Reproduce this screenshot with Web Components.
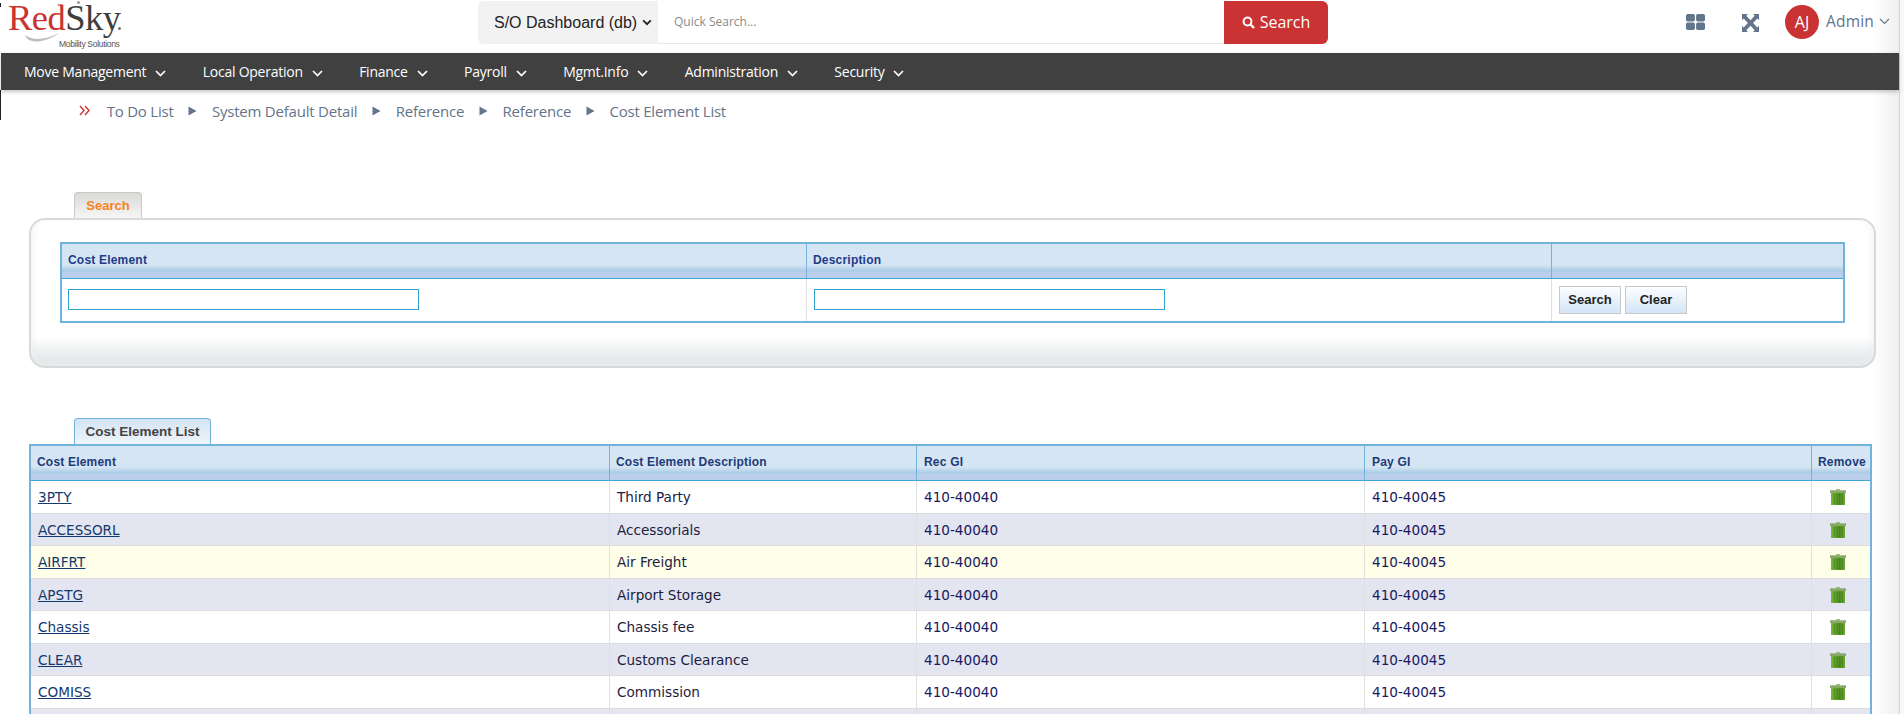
<!DOCTYPE html>
<html>
<head>
<meta charset="utf-8">
<title>Cost Element List</title>
<style>
	html, body { margin: 0; padding: 0; background: #fff; height: 714px; overflow: hidden; }
	body { font-family: "Open Sans", sans-serif; position: relative; }
</style>
</head>
<body>
<edge-strip></edge-strip>
<top-bar></top-bar>
<main-nav></main-nav>
<bread-crumb></bread-crumb>
<search-panel></search-panel>
<cost-list>
	<cost-row code="3PTY" desc="Third Party"></cost-row>
	<cost-row code="ACCESSORL" desc="Accessorials" tone="alt"></cost-row>
	<cost-row code="AIRFRT" desc="Air Freight" tone="over"></cost-row>
	<cost-row code="APSTG" desc="Airport Storage" tone="alt"></cost-row>
	<cost-row code="Chassis" desc="Chassis fee"></cost-row>
	<cost-row code="CLEAR" desc="Customs Clearance" tone="alt"></cost-row>
	<cost-row code="COMISS" desc="Commission"></cost-row>
	<cost-row tone="alt" blank></cost-row>
</cost-list>

<script>
class TopBar extends HTMLElement {
	connectedCallback() {
		const shadow = this.attachShadow({ mode: "open" });
		shadow.innerHTML = `
			<style>
				:host { display: flex; height: 53px; box-sizing: border-box; position: relative; z-index: 1; }
				.logo { width: 478px; flex: none; padding-left: 8px; box-sizing: border-box; position: relative; }
				.name { font: 36.5px/36px "Liberation Serif", serif; letter-spacing: -.5px; color: #c8342f; display: block; }
				.name b { font-weight: 400; color: #3e3e3e; }
				.dot { position: absolute; left: 77px; top: 1px; width: 3px; height: 3px; border-radius: 50%; background: #999; }
				.reg { position: absolute; left: 118px; top: 27px; width: 3px; height: 3px; border-radius: 50%; background: #777; }
				.tag { position: absolute; left: 59px; top: 39px; font: 8.6px/10px "Liberation Sans", sans-serif; letter-spacing: -.35px; color: #555; white-space: nowrap; }
				.swoosh { position: absolute; left: 25px; top: 32px; }
				.tick { position: absolute; left: 0; top: 3px; width: 1px; height: 4px; background: #222; }
				.search { display: flex; width: 850px; height: 43px; margin-top: 1px; }
				.db { width: 180px; background: #f2f2f2; border-radius: 6px 0 0 6px; font: 16px/43px "Liberation Sans", sans-serif; color: #222; padding-left: 16px; box-sizing: border-box; display: flex; align-items: center; gap: 5px; white-space: nowrap; }
				.q { flex: 1; border-bottom: 1px solid #e8e8e8; font: 12px/42px "Open Sans", sans-serif; color: #8a8a8a; padding-left: 16px; }
				.go { width: 104px; background: #cb3234; border-radius: 0 6px 6px 0; color: #fff; font: 16px/43px "Open Sans", sans-serif; display: flex; align-items: center; justify-content: center; gap: 5px; }
				.tools { flex: 1; display: flex; align-items: center; padding-left: 358px; color: #64748b; height: 44px; }
				.tools svg { flex: none; }
				.exp { margin-left: 37px; margin-top: 1px; }
				.av { flex: none; width: 34px; height: 34px; margin-left: 26px; border-radius: 50%; background: #cb3234; color: #fff; font: 16px/34px "Open Sans", sans-serif; text-align: center; }
				.me { font: 15.5px/20px "Open Sans", sans-serif; margin-left: 7px; white-space: nowrap; letter-spacing: .2px; margin-top: -2px; }
				.me-c { margin-left: 5px; margin-top: -2px; }
			</style>
			<div class="logo">
				<i class="tick"></i>
				<svg class="swoosh" width="36" height="14" viewBox="0 0 36 14"><path d="M0 3C2 10 15 14 34 1C20 8 8 9 0 3Z" fill="#bdbdbd"/></svg>
				<span class="name">Red<b>Sky</b></span>
				<span class="dot"></span>
				<span class="reg"></span>
				<span class="tag">Mobility Solutions</span>
			</div>
			<div class="search">
				<div class="db">S/O Dashboard (db)<svg width="10" height="7" viewBox="0 0 10 7"><path d="M1.2 1.4L5 5.2L8.8 1.4" fill="none" stroke="#222" stroke-width="1.8"/></svg></div>
				<div class="q">Quick Search...</div>
				<div class="go"><svg width="13" height="13" viewBox="0 0 13 13"><circle cx="5.5" cy="5.5" r="3.9" fill="none" stroke="#fff" stroke-width="2"/><path d="M8.4 8.4L12 12" stroke="#fff" stroke-width="2.4"/></svg>Search</div>
			</div>
			<div class="tools">
				<svg width="19" height="16" viewBox="0 0 19 16" fill="#64748b"><rect width="8.9" height="7.4" rx="1.7"/><rect x="10.1" width="8.9" height="7.4" rx="1.7"/><rect y="8.6" width="8.9" height="7.4" rx="1.7"/><rect x="10.1" y="8.6" width="8.9" height="7.4" rx="1.7"/></svg>
				<svg class="exp" width="17" height="18" viewBox="0 0 17 17" preserveAspectRatio="none" fill="#64748b"><path d="M0 0H6L4.3 1.7L8.5 5.9L12.7 1.7L11 0H17V6L15.3 4.3L11.1 8.5L15.3 12.7L17 11V17H11L12.7 15.3L8.5 11.1L4.3 15.3L6 17H0V11L1.7 12.7L5.9 8.5L1.7 4.3L0 6Z"/></svg>
				<div class="av">AJ</div>
				<span class="me">Admin</span>
				<svg class="me-c" width="11" height="7" viewBox="0 0 11 7"><path d="M1 1L5.5 5.5L10 1" fill="none" stroke="#64748b" stroke-width="1.1"/></svg>
			</div>
		`;
	}
}
customElements.define("top-bar", TopBar);

class MainNav extends HTMLElement {
	connectedCallback() {
		const items = ["Move Management", "Local Operation", "Finance", "Payroll", "Mgmt.Info", "Administration", "Security"];
		const shadow = this.attachShadow({ mode: "open" });
		shadow.innerHTML = `
			<style>
				:host { display: flex; height: 37px; margin: 0 5px 0 1px; background: #404040; box-shadow: 0 2px 4px rgba(0,0,0,.22); padding: 1px 0 0 23px; box-sizing: border-box; position: relative; align-items: center; gap: 36.4px; z-index: 2; }
				span { color: #fff; font: 14px/36px "Open Sans", sans-serif; letter-spacing: -.25px; display: flex; align-items: center; gap: 9px; white-space: nowrap; }
				svg { margin-top: 2px; }
			</style>
			${items.map(t => `<span>${t}<svg width="11" height="7" viewBox="0 0 11 7"><path d="M1 1L5.5 5.5L10 1" fill="none" stroke="#fff" stroke-width="1.7"/></svg></span>`).join("")}
		`;
	}
}
customElements.define("main-nav", MainNav);

class BreadCrumb extends HTMLElement {
	connectedCallback() {
		const items = ["To Do List", "System Default Detail", "Reference", "Reference", "Cost Element List"];
		const shadow = this.attachShadow({ mode: "open" });
		shadow.innerHTML = `
			<style>
				:host { display: flex; height: 36px; padding: 5px 0 0 79px; box-sizing: border-box; align-items: center; gap: 14.7px; font: 15px/20px "Open Sans", sans-serif; color: #64748b; letter-spacing: -.22px; position: relative; }
				:host::before { content: ""; position: absolute; left: 0; top: 0; width: 1px; height: 30px; background: #222; }
				svg { flex: none; }
				.r { margin-right: 2px; }
			</style>
			<svg class="r" width="11" height="11" viewBox="0 0 11 11"><path d="M1 1L5 5.5L1 10M6 1L10 5.5L6 10" fill="none" stroke="#cb3234" stroke-width="1.4"/></svg>
			${items.map((t, i) => `${i ? `<svg width="9" height="10" viewBox="0 0 9 10"><path d="M0.5 0.5L8.5 5L0.5 9.5Z" fill="#64748b"/></svg>` : ""}<span>${t}</span>`).join("")}
		`;
	}
}
customElements.define("bread-crumb", BreadCrumb);

class SearchPanel extends HTMLElement {
	connectedCallback() {
		const shadow = this.attachShadow({ mode: "open" });
		shadow.innerHTML = `
			<style>
				:host { display: block; margin: 66px 0 0 29px; width: 1847px; font-family: "Liberation Sans", sans-serif; position: relative; }
				.tab { display: block; margin-left: 45px; height: 26px; width: 68px; box-sizing: border-box; border: 1px solid #c9c9c7; border-bottom: 0; border-radius: 4px 4px 0 0; background: linear-gradient(#d9d9d7, #f6f6f4); color: #f58220; font: bold 13px/25px "Liberation Sans", sans-serif; text-align: center; }
				.box { height: 150px; box-sizing: border-box; border: 2px solid #d9d9d9; border-radius: 16px; background: linear-gradient(#fff 0, #fff 117px, #e6e9eb 138px); box-shadow: inset 6px 0 10px -6px #eceeef, inset -6px 0 10px -6px #eceeef; padding: 22px 29px 0; }
				.t { border: 2px solid #72b3dd; display: grid; grid-template-columns: 745px 745px 1fr; grid-template-rows: 35px 1fr; height: 81px; box-sizing: border-box; background: #fff; }
				.h { box-sizing: border-box; border-bottom: 1px solid #3ea6d2; background: linear-gradient(#d6e5f4 0, #d6e5f4 21px, #a9cbe5 27px, #bbcfec 28px, #bbcfec 100%); color: #1f3c88; font: bold 12px/32px "Liberation Sans", sans-serif; padding-left: 6px; letter-spacing: .2px; border-right: 1px solid #72b3dd; }
				.h:nth-child(3) { border-right: 0; }
				.c { border-right: 1px solid #e0e0e0; padding: 10px 0 0 6px; box-sizing: border-box; }
				.c:nth-child(5) { padding-left: 7px; }
				.c:nth-child(6) { border-right: 0; padding-left: 7px; display: flex; gap: 4px; }
				.i { width: 351px; height: 21px; box-sizing: border-box; border: 1px solid #2fa0cf; }
				.b { width: 62px; height: 28px; box-sizing: border-box; border: 1px solid #c8c8c8; background: linear-gradient(#fdfeff, #d3e5f7); color: #222; font: bold 13px/26px "Liberation Sans", sans-serif; text-align: center; margin-top: -3px; }
			</style>
			<div class="tab">Search</div>
			<div class="box">
				<div class="t">
					<div class="h">Cost Element</div><div class="h">Description</div><div class="h"></div>
					<div class="c"><div class="i"></div></div>
					<div class="c"><div class="i"></div></div>
					<div class="c"><div class="b">Search</div><div class="b">Clear</div></div>
				</div>
			</div>
		`;
	}
}
customElements.define("search-panel", SearchPanel);

class CostRow extends HTMLElement {
	connectedCallback() {
		const shadow = this.attachShadow({ mode: "open" });
		const tone = this.getAttribute("tone");
		const blank = this.hasAttribute("blank");
		const bg = tone === "alt" ? "#e3e5f0" : tone === "over" ? "#fefee9" : "#fff";
		shadow.innerHTML = `
			<style>
				:host { display: grid; grid-template-columns: 579px 307px 448px 447px 1fr; height: 32.5px; box-sizing: border-box; border-bottom: 1px solid #dcdcdc; background: ${bg}; font: 13.6px/32px "DejaVu Sans", sans-serif; color: #1c1c40; }
				div { padding-left: 7px; border-right: 1px solid #e0e0e0; white-space: nowrap; box-sizing: border-box; }
				div:first-child { padding-left: 8px; }
				div:last-child { border-right: 0; padding: 0 7px 0 0; display: flex; justify-content: center; align-items: center; }
				a { color: #14396e; text-decoration: underline; }
				.n { color: #1a1a5e; }
			</style>
			<div><a>${this.getAttribute("code") || ""}</a></div>
			<div>${this.getAttribute("desc") || ""}</div>
			<div class="n">${blank ? "" : "410-40040"}</div>
			<div class="n">${blank ? "" : "410-40045"}</div>
			<div>${blank ? "" : `
				<svg width="16" height="16" viewBox="0 0 16 16">
					<defs><linearGradient id="g" x1="0" y1="0" x2="1" y2="0"><stop offset="0" stop-color="#7cb83e"/><stop offset=".6" stop-color="#4f8f1f"/><stop offset="1" stop-color="#6ea536"/></linearGradient></defs>
					<path d="M6 0.3H10V1.5H6Z" fill="#7aa64a"/>
					<path d="M0 1.3H16V4H0Z" fill="#88a86a"/>
					<path d="M1 4H15V16H1Z" fill="url(#g)"/>
					<path d="M4.2 5V15M7 5V15M9.8 5V15M12.4 5V15" stroke="#41781a" stroke-width=".9" opacity=".75"/>
				</svg>`}
			</div>
		`;
	}
}
customElements.define("cost-row", CostRow);

class CostList extends HTMLElement {
	connectedCallback() {
		const shadow = this.attachShadow({ mode: "open" });
		shadow.innerHTML = `
			<style>
				:host { display: block; margin: 50px 0 0 29px; width: 1843px; font-family: "Liberation Sans", sans-serif; position: relative; }
				.tab { display: block; margin-left: 45px; height: 26px; width: 137px; box-sizing: border-box; border: 1px solid #72b3dd; border-bottom: 0; border-radius: 4px 4px 0 0; background: linear-gradient(#d4e4f3, #eef4fa); color: #444; font: bold 13.5px/25px "Liberation Sans", sans-serif; text-align: center; white-space: nowrap; }
				.t { border: 2px solid #72b3dd; border-bottom: 0; height: 270px; box-sizing: border-box; overflow: hidden; background: #fff; }
				.hr { display: grid; grid-template-columns: 579px 307px 448px 447px 1fr; height: 35px; }
				.h { box-sizing: border-box; border-bottom: 1px solid #3ea6d2; border-right: 1px solid #72b3dd; background: linear-gradient(#d6e5f4 0, #d6e5f4 21px, #a9cbe5 27px, #bbcfec 28px, #bbcfec 100%); color: #1d3b78; font: bold 12px/32px "Liberation Sans", sans-serif; padding-left: 6px; letter-spacing: .2px; }
				.h:nth-child(3), .h:nth-child(4) { padding-left: 7px; }
				.h:last-child { border-right: 0; padding-left: 6px; }
			</style>
			<div class="tab">Cost Element List</div>
			<div class="t">
				<div class="hr">
					<div class="h">Cost Element</div><div class="h">Cost Element Description</div><div class="h">Rec GI</div><div class="h">Pay GI</div><div class="h">Remove</div>
				</div>
				<slot></slot>
			</div>
		`;
	}
}
customElements.define("cost-list", CostList);

class EdgeStrip extends HTMLElement {
	connectedCallback() {
		const shadow = this.attachShadow({ mode: "open" });
		shadow.innerHTML = `
			<style>
				:host { position: absolute; top: 0; right: 0; width: 32px; height: 714px; display: flex; }
				.fade { width: 27px; background: linear-gradient(90deg, #fff, #efefef); }
				.line { width: 1px; background: #d4d4d4; }
				.rest { flex: 1; background: #f8f8f8; }
			</style>
			<div class="fade"></div><div class="line"></div><div class="rest"></div>
		`;
	}
}
customElements.define("edge-strip", EdgeStrip);
</script>
</body>
</html>
